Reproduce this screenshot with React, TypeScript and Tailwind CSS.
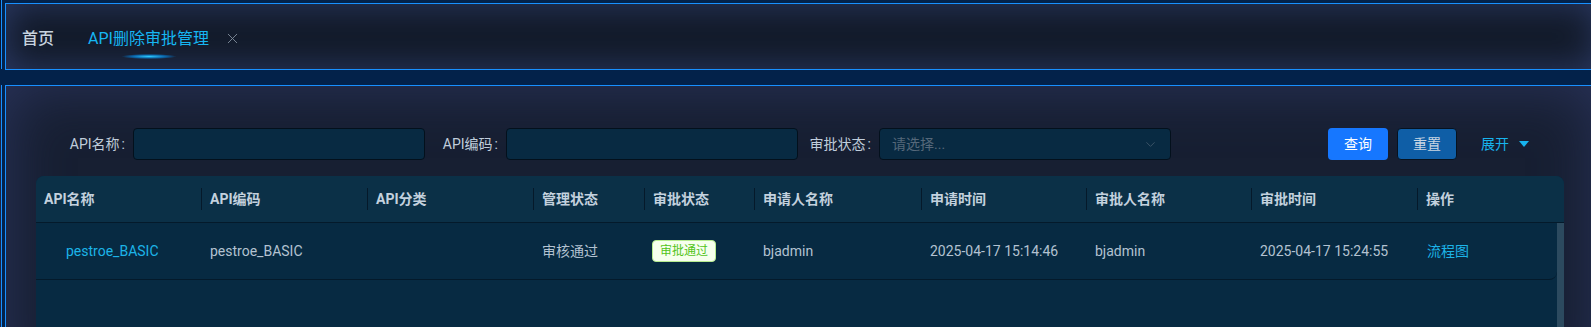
import { ChevronDown, X } from "lucide-react"

const cols = "grid-cols-[165px_166px_166px_111px_110px_167px_165px_165px_166px_1fr]"

const headers = ["API名称", "API编码", "API分类", "管理状态", "审批状态", "申请人名称", "申请时间", "审批人名称", "审批时间", "操作"]

function FormItem({ label, placeholder, select }: { label: string; placeholder?: string; select?: boolean }) {
  return (
    <div className="flex items-center">
      <label className="w-[81px] pr-[8px] text-right text-[14px] text-[#c0cddb]">
        {label}
        <span className="ml-[2px]">:</span>
      </label>
      <div className="flex h-[32px] w-[292px] items-center justify-between rounded-[4px] border border-[#03101c] bg-[#082a42] px-3">
        <span className="text-[14px] text-[#55687a]">{placeholder}</span>
        {select && <ChevronDown size={15} strokeWidth={1.5} className="text-[#3e5569]" />}
      </div>
    </div>
  )
}

export default function App() {
  return (
    <div className="h-[327px] w-full overflow-hidden bg-[#03224a] font-['Roboto','Noto_Sans_CJK_SC',sans-serif]">
      {/* tab bar */}
      <div className="flex h-[70px]">
        <div className="h-[69px] w-[2px] shrink-0 border-r border-[#1890ff] bg-[#0a1732]" />
        <div className="ml-[3px] mr-[-6px] mt-[3px] flex h-[67px] flex-1 items-center gap-[34px] border border-[#1890ff] bg-[#121a29] pl-[16px] pt-[4px] shadow-[inset_0_0_36px_rgba(45,60,105,0.95)]">
          <span className="text-[16px] font-medium text-[#c7d3df]">首页</span>
          <div className="relative flex items-center">
            <span className="text-[16px] text-[#16b6f2]">API删除审批管理</span>
            <X size={17} strokeWidth={1.3} className="ml-[15px] text-[#7f8c9b]" />
            <div className="absolute left-[34px] top-[27px] h-[5px] w-[54px] bg-[radial-gradient(ellipse_at_center,#2ccaff_0%,rgba(0,150,255,0.55)_45%,transparent_72%)]" />
          </div>
        </div>
      </div>

      {/* main panel */}
      <div className="mt-[15px] flex h-[300px]">
        <div className="w-[2px] shrink-0 border-r border-[#1890ff] bg-[#1e2540]" />
        <div className="ml-[3px] mr-[-6px] flex-1 border-l border-t border-[#1890ff] bg-[#171f32] pt-[42px] shadow-[inset_0_0_60px_rgba(42,52,92,1)]">
          <div className="flex h-[32px] items-center pl-[46px]">
            <FormItem label="API名称" />
            <FormItem label="API编码" />
            <FormItem label="审批状态" placeholder="请选择..." select />
            <button className="ml-[157px] h-[32px] w-[60px] rounded-[4px] bg-[#1677ff] text-[14px] text-white">查询</button>
            <button className="ml-[9px] h-[32px] w-[60px] rounded-[4px] border border-[#06121f] bg-[#0f5ea6] text-[14px] text-[#c9d6e3]">重置</button>
            <button className="ml-[24px] flex items-center gap-[10px] text-[14px] text-[#17b4ee]">
              展开
              <svg width="10" height="6" viewBox="0 0 10 6"><path d="M0 0h10L5 6z" fill="#17b4ee" /></svg>
            </button>
          </div>

          <div className="ml-[30px] mt-[16px] w-[1528px] overflow-hidden rounded-t-[8px] bg-[#072a42]">
            <div className={`grid h-[47px] ${cols} border-b border-[#041a2b] bg-[#0b3047]`}>
              {headers.map((h, i) => (
                <div key={h} className="flex items-center">
                  {i > 0 && <div className="h-[22px] w-px bg-[#05192a]" />}
                  <span className="pl-[8px] text-[14px] font-bold text-[#c3d1de]">{h}</span>
                </div>
              ))}
            </div>
            <div className="flex h-[110px]">
              <div className="flex-1">
                <div className={`grid h-[57px] ${cols} items-center rounded-br-[8px] border-b border-[#041a2b] text-[14px] text-[#b3c2d1]`}>
                  <span className="pl-[30px] text-[#1cb4e8]">pestroe_BASIC</span>
                  <span className="pl-[9px]">pestroe_BASIC</span>
                  <span />
                  <span className="pl-[9px]">审核通过</span>
                  <span className="pl-[8px]">
                    <span className="inline-flex h-[22px] items-center rounded-[4px] border border-[#b7eb8f] bg-[#f6ffed] px-[7px] text-[12px] text-[#52c41a]">审批通过</span>
                  </span>
                  <span className="pl-[9px]">bjadmin</span>
                  <span className="pl-[9px]">2025-04-17 15:14:46</span>
                  <span className="pl-[9px]">bjadmin</span>
                  <span className="pl-[9px]">2025-04-17 15:24:55</span>
                  <span className="pl-[10px] text-[#1cb4e8]">流程图</span>
                </div>
              </div>
              <div className="w-[7px] bg-[#2c4a5f]" />
            </div>
          </div>
        </div>
      </div>
    </div>
  )
}
